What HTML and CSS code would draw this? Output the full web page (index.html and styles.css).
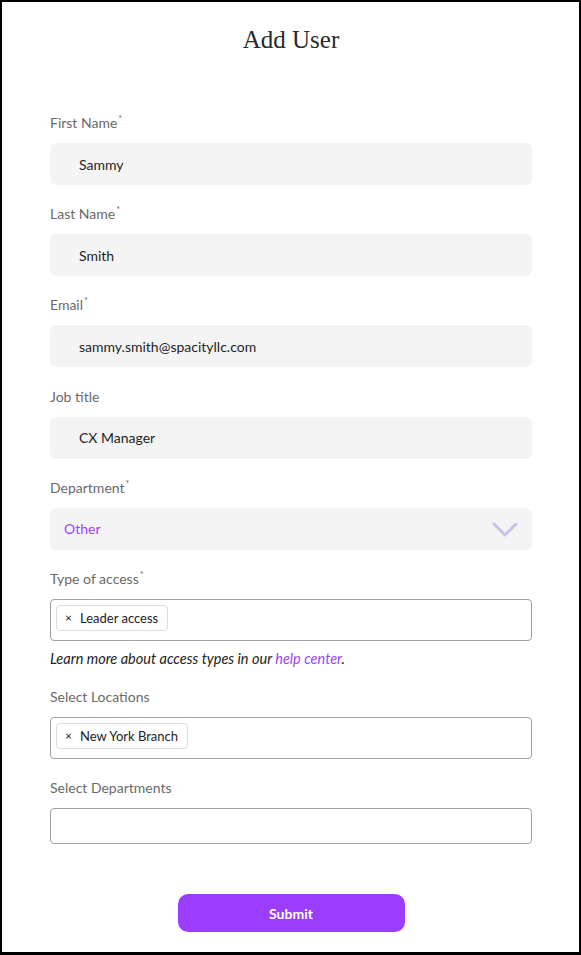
FILE: index.html
```html
<!DOCTYPE html>
<html>
<head>
<meta charset="utf-8">
<link rel="stylesheet" href="styles.css">
</head>
<body>
<div class="frame">
  <h1 class="title">Add User</h1>
  <form class="form">
    <div class="field">
      <div class="label">First Name<sup>*</sup></div>
      <div class="input">Sammy</div>
    </div>
    <div class="field">
      <div class="label">Last Name<sup>*</sup></div>
      <div class="input">Smith</div>
    </div>
    <div class="field">
      <div class="label">Email<sup>*</sup></div>
      <div class="input">sammy.smith@spacityllc.com</div>
    </div>
    <div class="field">
      <div class="label">Job title</div>
      <div class="input">CX Manager</div>
    </div>
    <div class="field">
      <div class="label">Department<sup>*</sup></div>
      <div class="input select"><span class="sel-value">Other</span>
        <svg class="chev" width="26" height="16" viewBox="0 0 26 16"><path d="M2 2 L13 13 L24 2" fill="none" stroke="#cbc0e8" stroke-width="3" stroke-linecap="round" stroke-linejoin="round"/></svg>
      </div>
    </div>
    <div class="field">
      <div class="label">Type of access<sup>*</sup></div>
      <div class="multi"><span class="chip"><span class="x">×</span>Leader access</span></div>
      <div class="help">Learn more about access types in our <a href="#">help center</a>.</div>
    </div>
    <div class="field">
      <div class="label">Select Locations</div>
      <div class="multi"><span class="chip"><span class="x">×</span>New York Branch</span></div>
    </div>
    <div class="field">
      <div class="label">Select Departments</div>
      <div class="multi empty"></div>
    </div>
    <div class="actions">
      <button type="button" class="submit">Submit</button>
    </div>
  </form>
</div>
</body>
</html>
```
FILE: styles.css
```css
* { box-sizing: border-box; }
html, body { margin: 0; padding: 0; background: #fff; }
.frame {
  width: 581px;
  height: 955px;
  border: 2px solid #000;
  border-bottom-width: 3px;
  padding: 23px 47px 0 48px;
  font-family: Lato, "Open Sans", sans-serif;
}
.title {
  margin: 0;
  text-align: center;
  font-family: "Liberation Serif", "DejaVu Serif", serif;
  font-weight: 400;
  font-size: 25px;
  line-height: 30px;
  color: #2a2a2a;
}
.form { margin-top: 58px; display: flex; flex-direction: column; }
.field { display: flex; flex-direction: column; margin-bottom: 19.2px; }
.label {
  font-size: 14px;
  line-height: 20px;
  color: #6a6a6a;
  margin-bottom: 10px;
}
.label sup { font-size: 9px; vertical-align: top; line-height: 12px; margin-left: 1px; }
.input {
  height: 42px;
  background: #f4f4f4;
  border-radius: 6px;
  padding: 0 29px;
  display: flex;
  align-items: center;
  font-size: 14px;
  color: #1f1f1f;
}
.select { justify-content: space-between; padding: 0 14px 0 14px; }
.sel-value { color: #9b46f5; }
.chev { display: block; margin-top: 2px; }
.multi {
  height: 42px;
  border: 1px solid #a0a0a0;
  border-radius: 4px;
  padding: 5px 5px;
  display: flex;
  align-items: flex-start;
}
.multi.empty { height: 36px; }
.chip {
  height: 26px;
  display: inline-flex;
  align-items: center;
  border: 1px solid #dcdcdc;
  border-radius: 4px;
  padding: 0 9px 0 8px;
  font-size: 13px;
  color: #222;
}
.chip .x { font-size: 12px; margin-right: 8px; }
.help {
  margin-top: 8px;
  font-size: 14.5px;
  line-height: 20px;
  font-style: italic;
  color: #222;
  margin-bottom: -1.2px;
}
.help a { color: #9b46f5; text-decoration: none; }
.actions { display: flex; justify-content: center; margin-top: 30.8px; }
.submit {
  width: 227px;
  height: 38px;
  border: none;
  border-radius: 10px;
  background: #9a3dff;
  color: #fff;
  font-family: Lato, "Open Sans", sans-serif;
  font-weight: 700;
  font-size: 14px;
}
```
